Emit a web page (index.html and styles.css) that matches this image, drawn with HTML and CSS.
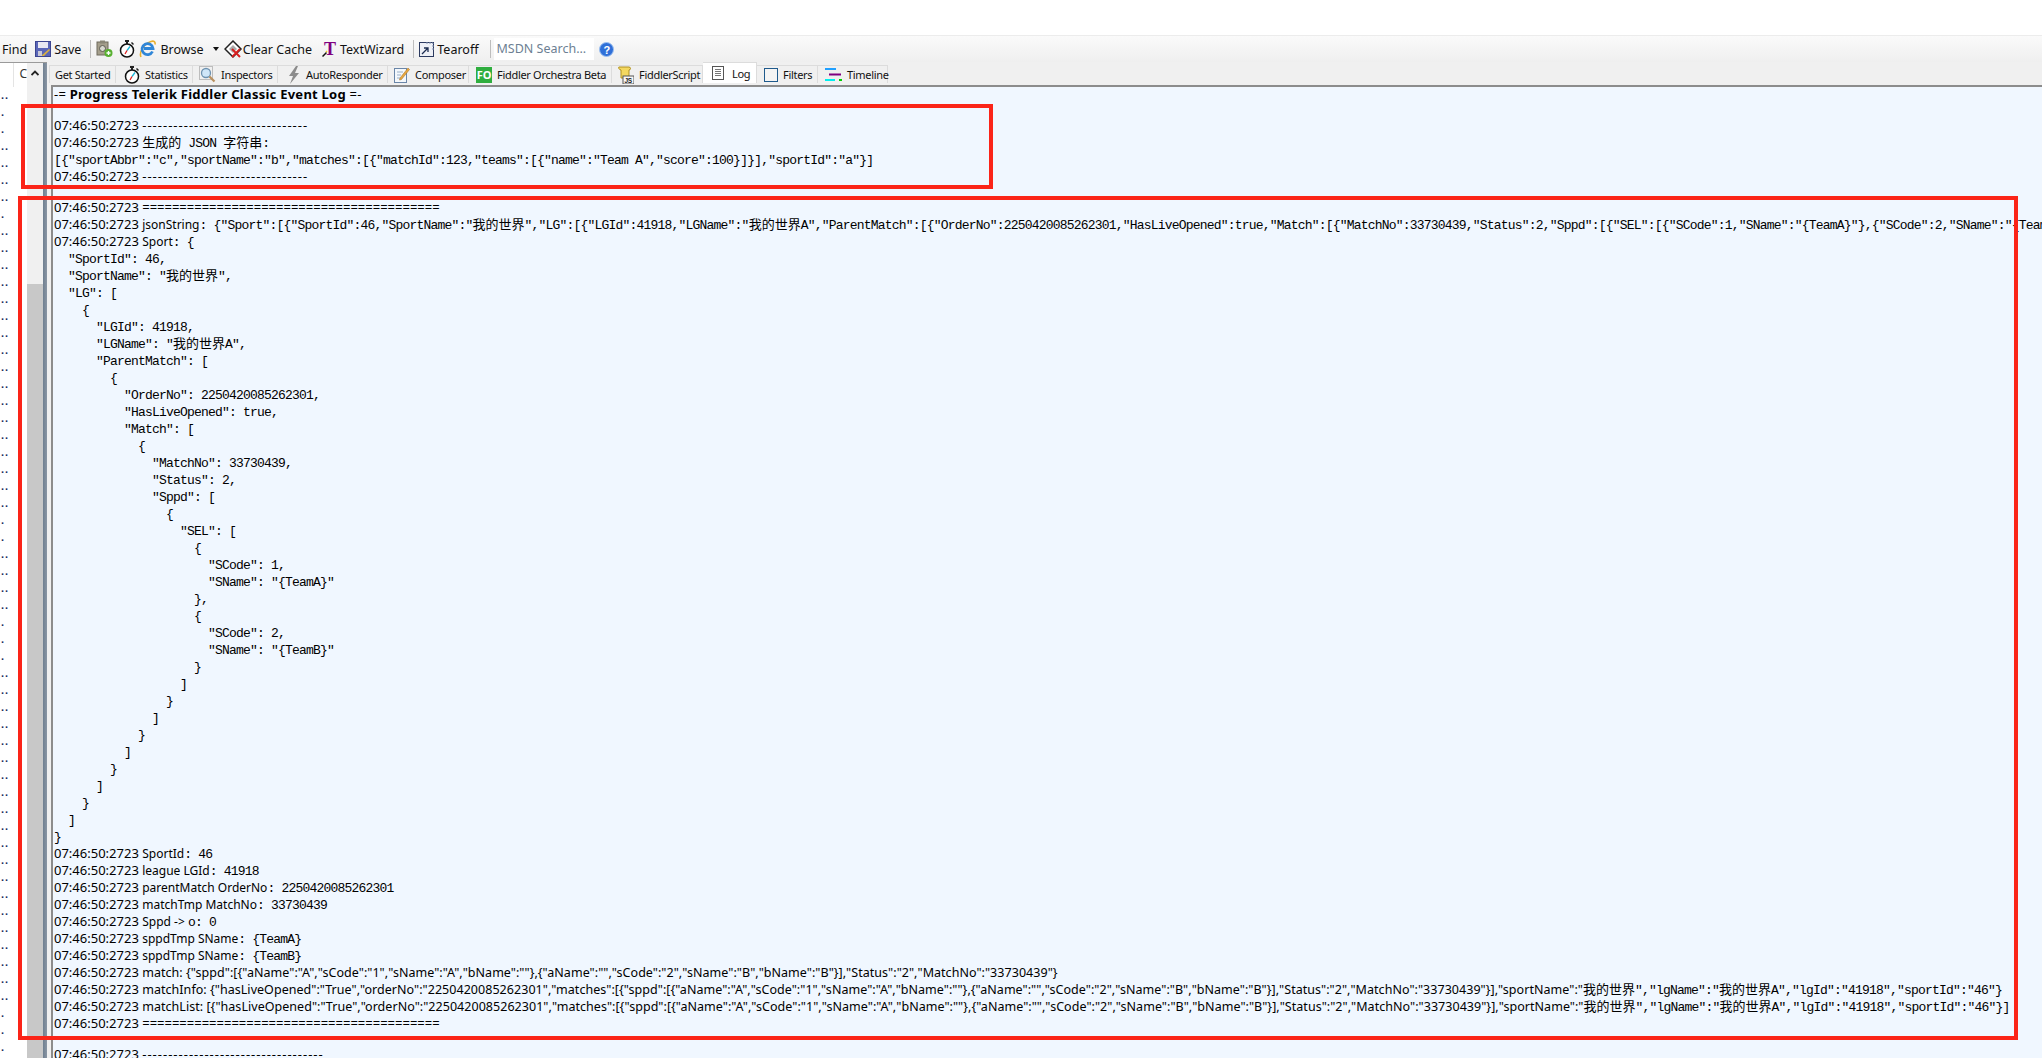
FILE: index.html
```html
<!DOCTYPE html>
<html lang="zh-CN">
<head>
    <meta charset="UTF-8">
    <title>Progress Telerik Fiddler Classic</title>
    <link rel="stylesheet" href="styles.css">
</head>
<body>
    <svg class="defs" width="0" height="0">
        <symbol id="stopwatch" viewBox="0 0 16 18">
            <rect x="6" y="0" width="4" height="2" fill="#222"/>
            <rect x="7" y="2" width="2" height="2" fill="#222"/>
            <path d="M12.500 2.500l2 2" stroke="#222" stroke-width="1.500"/>
            <circle cx="8" cy="10.500" r="6.500" fill="#fff" stroke="#111" stroke-width="1.500"/>
            <path d="M8 10.500l3-4" stroke="#19b5d8" stroke-width="1.300"/>
            <path d="M8 10.500l-2 3.500" stroke="#e02020" stroke-width="1.300"/>
        </symbol>
    </svg>

    <div class="titlebar"></div>

    <div class="toolbar">
        <span class="tool tool-find">Find</span>
        <span class="tool tool-save">
            <svg width="16" height="16" viewBox="0 0 16 16"><rect x="0.500" y="0.500" width="15" height="15" fill="#5a66b8" stroke="#3c4590"/><rect x="3" y="1" width="10" height="6" fill="#e8e8f2"/><path d="M6 15l8-7 1 1-6 6z" fill="#d8b040"/><path d="M3 10h4v5H3z" fill="#c8c8d8"/></svg>
            Save
        </span>
        <span class="sep sep-a"></span>
        <span class="tool tool-snap">
            <svg width="17" height="18" viewBox="0 0 17 18"><rect x="1" y="2" width="11" height="13" fill="#a59f8c" stroke="#6e6a5c"/><rect x="4" y="0.500" width="5" height="3" fill="#8a8676"/><circle cx="6.500" cy="8.500" r="3" fill="#d8d8d0" stroke="#5c5a50"/><circle cx="12.500" cy="13" r="4" fill="#58b030"/><path d="M10.500 13h4M12.500 11v4" stroke="#fff" stroke-width="1.300"/></svg>
        </span>
        <span class="tool tool-timer"><svg width="16" height="18"><use href="#stopwatch"/></svg></span>
        <span class="tool tool-browse">
            <svg width="17" height="18" viewBox="0 0 17 18"><path d="M2 17C0 13 4 4 12 1.500c3-1 4.500 .5 4 3" fill="none" stroke="#e8b030" stroke-width="1.600"/><path d="M13.500 11.500A5.500 5.500 0 1 1 14 8.500H5" fill="none" stroke="#2f86d8" stroke-width="2.800"/></svg>
            Browse
        </span>
        <svg class="tool-arrow" width="6" height="4" viewBox="0 0 6 4"><path d="M0 0h6L3 4z" fill="#111"/></svg>
        <span class="tool tool-clear">
            <svg width="19" height="19" viewBox="0 0 19 19"><path d="M9 1l8 8-8 8-8-8z" fill="#fff" stroke="#222" stroke-width="1.500"/><path d="M5 9l4-4 4 4-4 4z" fill="#aaa"/><path d="M8 9l8 8M16 9l-8 8" stroke="#d82020" stroke-width="2"/></svg>
            Clear Cache
        </span>
        <span class="tool tool-wizard">
            <svg width="15" height="16" viewBox="0 0 15 16"><text class="wizard-t" x="2" y="14">T</text><path d="M0.500 15.500l4-4" stroke="#111" stroke-width="1.500"/><path d="M4 11l1-1" stroke="#f0d020" stroke-width="1.500"/></svg>
            TextWizard
        </span>
        <span class="sep sep-b"></span>
        <span class="tool tool-tearoff">
            <svg width="15" height="15" viewBox="0 0 15 15"><rect x="0.500" y="0.500" width="14" height="14" fill="#eef0f6" stroke="#2c3a60"/><path d="M7 1h7v7" fill="none" stroke="#8090b0" stroke-dasharray="2 1"/><path d="M3 12l6-6M5 6h4v4" fill="none" stroke="#1c2c50" stroke-width="1.300"/></svg>
            Tearoff
        </span>
        <span class="sep sep-c"></span>
        <span class="msdn">MSDN Search...</span>
        <svg class="help" width="15" height="15" viewBox="0 0 15 15"><circle cx="7.500" cy="7.500" r="7" fill="#2f6fd8" stroke="#9cc0f0"/><text class="help-q" x="4.500" y="11.500">?</text></svg>
    </div>

    <div class="main">
        <div class="side">
            <div class="list">
                <div class="list-head"><span class="list-col"></span><span class="list-c">C</span></div>
                <pre class="dots">..
.
.
..
..
..
..
.
..
..
..
..
..
..
..
..
..
..
..
..
..
..
..
..
..
.
.
..
..
..
..
.
.
.
..
..
..
..
..
..
..
..
..
..
..
..
..
..
..
..
..
..
..
..
.
.
.</pre>
            </div>
            <div class="scroll">
                <div class="scroll-up"><svg width="8" height="6" viewBox="0 0 8 6"><path d="M0.500 5L4 1.500 7.500 5" fill="none" stroke="#222" stroke-width="1.800"/></svg></div>
                <div class="scroll-track"></div>
                <div class="scroll-thumb"></div>
            </div>
            <div class="side-edge"></div>
        </div>

        <div class="right">
            <div class="tabs">
                <div class="tab tab-started">Get Started</div>
                <div class="tab tab-stats"><svg width="16" height="18"><use href="#stopwatch"/></svg>Statistics</div>
                <div class="tab tab-inspect">
                    <svg width="17" height="17" viewBox="0 0 17 17"><rect x="0.500" y="0.500" width="13" height="13" fill="none" stroke="#8a8a8a" stroke-dasharray="1 1"/><circle cx="7" cy="7" r="4.500" fill="#cfe6f8" stroke="#6e92b0" stroke-width="1.300"/><path d="M10.500 10.500l5 5" stroke="#b89060" stroke-width="2.200"/></svg>
                    Inspectors
                </div>
                <div class="tab tab-auto">
                    <svg width="13" height="18" viewBox="0 0 13 18"><path d="M8 0L1 10h4l-3 8 9-11H7l3-7z" fill="#8c8c8c"/></svg>
                    AutoResponder
                </div>
                <div class="tab tab-composer">
                    <svg width="16" height="17" viewBox="0 0 16 17"><rect x="0.500" y="2.500" width="12" height="14" fill="#f4f8fc" stroke="#6a86a8"/><path d="M3 6h6M3 9h4M3 12h3" stroke="#9ab0c8"/><path d="M6 12l8-10 1.500 1.500-8 10-2 .5z" fill="#e8a840" stroke="#a06c20" stroke-width="0.500"/></svg>
                    Composer
                </div>
                <div class="tab tab-orch"><span class="fo">FO</span>Fiddler Orchestra Beta</div>
                <div class="tab tab-script">
                    <svg width="16" height="18" viewBox="0 0 16 18"><path d="M1 1h10c2 0 2 3 0 3v8H3V4C1 4 0 1 1 1z" fill="#f4d860" stroke="#b09020"/><rect x="5" y="10" width="11" height="8" fill="#f8f8f8" stroke="#555"/><text class="script-js" x="6.500" y="16.500">JS</text></svg>
                    FiddlerScript
                </div>
                <div class="tab tab-log active">
                    <svg width="12" height="14" viewBox="0 0 12 14"><rect x="0.500" y="0.500" width="11" height="13" fill="#fff" stroke="#555"/><path d="M3 3.500h6M3 5.500h6M3 7.500h6M3 9.500h6" stroke="#777"/></svg>
                    Log
                </div>
                <div class="tab tab-filters"><span class="filter-box"></span>Filters</div>
                <div class="tab tab-time">
                    <svg width="17" height="13" viewBox="0 0 17 13"><path d="M0 1h11" stroke="#20a0ff" stroke-width="2"/><path d="M4 6.500h12" stroke="#800080" stroke-width="2"/><path d="M0 12h10" stroke="#00f0f0" stroke-width="2"/><path d="M14 12h3" stroke="#00d000" stroke-width="2"/></svg>
                    Timeline
                </div>
            </div>

            <div class="log">
                <div class="line head"><span class="ts">-= <b>Progress Telerik Fiddler Classic Event Log</b> =-</span></div>
                <div class="gap"></div>
                <div class="line"><span class="ts">07:46:50:2723 <span class="dash">--------------------------------</span></span></div>
                <div class="line"><span class="ts">07:46:50:2723 </span><span class="mono"><span class="zh">生成的</span> JSON <span class="zh">字符串</span>:</span></div>
                <div class="line"><span class="mono">[{"sportAbbr":"c","sportName":"b","matches":[{"matchId":123,"teams":[{"name":"Team A","score":100}]}],"sportId":"a"}]</span></div>
                <div class="line"><span class="ts">07:46:50:2723 <span class="dash">--------------------------------</span></span></div>
                <div class="gap"></div>
                <div class="line"><span class="ts">07:46:50:2723 ========================================</span></div>
                <div class="line"><span class="ts">07:46:50:2723 </span><span class="sans">jsonString</span><span class="mono">: {"Sport":[{"SportId":46,"SportName":"<span class="zh">我的世界</span>","LG":[{"LGId":41918,"LGName":"<span class="zh">我的世界</span>A","ParentMatch":[{"OrderNo":2250420085262301,"HasLiveOpened":true,"Match":[{"MatchNo":33730439,"Status":2,"Sppd":[{"SEL":[{"SCode":1,"SName":"{TeamA}"},{"SCode":2,"SName":"{TeamB}"}]}]}]}]}]}]}</span></div>
                <div class="line"><span class="ts">07:46:50:2723 </span><span class="sans">Sport</span><span class="mono">: {</span></div>
                <div class="line"><span class="mono">  "SportId": 46,</span></div>
                <div class="line"><span class="mono">  "SportName": "<span class="zh">我的世界</span>",</span></div>
                <div class="line"><span class="mono">  "LG": [</span></div>
                <div class="line"><span class="mono">    {</span></div>
                <div class="line"><span class="mono">      "LGId": 41918,</span></div>
                <div class="line"><span class="mono">      "LGName": "<span class="zh">我的世界</span>A",</span></div>
                <div class="line"><span class="mono">      "ParentMatch": [</span></div>
                <div class="line"><span class="mono">        {</span></div>
                <div class="line"><span class="mono">          "OrderNo": 2250420085262301,</span></div>
                <div class="line"><span class="mono">          "HasLiveOpened": true,</span></div>
                <div class="line"><span class="mono">          "Match": [</span></div>
                <div class="line"><span class="mono">            {</span></div>
                <div class="line"><span class="mono">              "MatchNo": 33730439,</span></div>
                <div class="line"><span class="mono">              "Status": 2,</span></div>
                <div class="line"><span class="mono">              "Sppd": [</span></div>
                <div class="line"><span class="mono">                {</span></div>
                <div class="line"><span class="mono">                  "SEL": [</span></div>
                <div class="line"><span class="mono">                    {</span></div>
                <div class="line"><span class="mono">                      "SCode": 1,</span></div>
                <div class="line"><span class="mono">                      "SName": "{TeamA}"</span></div>
                <div class="line"><span class="mono">                    },</span></div>
                <div class="line"><span class="mono">                    {</span></div>
                <div class="line"><span class="mono">                      "SCode": 2,</span></div>
                <div class="line"><span class="mono">                      "SName": "{TeamB}"</span></div>
                <div class="line"><span class="mono">                    }</span></div>
                <div class="line"><span class="mono">                  ]</span></div>
                <div class="line"><span class="mono">                }</span></div>
                <div class="line"><span class="mono">              ]</span></div>
                <div class="line"><span class="mono">            }</span></div>
                <div class="line"><span class="mono">          ]</span></div>
                <div class="line"><span class="mono">        }</span></div>
                <div class="line"><span class="mono">      ]</span></div>
                <div class="line"><span class="mono">    }</span></div>
                <div class="line"><span class="mono">  ]</span></div>
                <div class="line"><span class="mono">}</span></div>
                <div class="line"><span class="ts">07:46:50:2723 </span><span class="sans">SportId</span><span class="mono">: 46</span></div>
                <div class="line"><span class="ts">07:46:50:2723 </span><span class="sans">league LGId</span><span class="mono">: 41918</span></div>
                <div class="line"><span class="ts">07:46:50:2723 </span><span class="sans">parentMatch OrderNo</span><span class="mono">: 2250420085262301</span></div>
                <div class="line"><span class="ts">07:46:50:2723 </span><span class="sans">matchTmp MatchNo</span><span class="mono">: 33730439</span></div>
                <div class="line"><span class="ts">07:46:50:2723 </span><span class="sans">Sppd -&gt; </span><span class="mono">o: 0</span></div>
                <div class="line"><span class="ts">07:46:50:2723 </span><span class="sans">sppdTmp SName</span><span class="mono">: {TeamA}</span></div>
                <div class="line"><span class="ts">07:46:50:2723 </span><span class="sans">sppdTmp SName</span><span class="mono">: {TeamB}</span></div>
                <div class="line"><span class="ts">07:46:50:2723 </span><span class="json">match: {"sppd":[{"aName":"A","sCode":"1","sName":"A","bName":""},{"aName":"","sCode":"2","sName":"B","bName":"B"}],"Status":"2","MatchNo":"33730439"}</span></div>
                <div class="line"><span class="ts">07:46:50:2723 </span><span class="json">matchInfo: {"hasLiveOpened":"True","orderNo":"2250420085262301","matches":[{"sppd":[{"aName":"A","sCode":"1","sName":"A","bName":""},{"aName":"","sCode":"2","sName":"B","bName":"B"}],"Status":"2","MatchNo":"33730439"}],"sportName":"</span><span class="mono"><span class="zh">我的世界</span>","lgName":"<span class="zh">我的世界</span>A","lgId":"41918","sportId":"46"}</span></div>
                <div class="line"><span class="ts">07:46:50:2723 </span><span class="json">matchList: [{"hasLiveOpened":"True","orderNo":"2250420085262301","matches":[{"sppd":[{"aName":"A","sCode":"1","sName":"A","bName":""},{"aName":"","sCode":"2","sName":"B","bName":"B"}],"Status":"2","MatchNo":"33730439"}],"sportName":"</span><span class="mono"><span class="zh">我的世界</span>","lgName":"<span class="zh">我的世界</span>A","lgId":"41918","sportId":"46"}]</span></div>
                <div class="line"><span class="ts">07:46:50:2723 ========================================</span></div>
                <div class="gap"></div>
                <div class="line"><span class="ts">07:46:50:2723 <span class="dash">-----------------------------------</span></span></div>
            </div>
        </div>
    </div>

    <div class="mark mark-top"></div>
    <div class="mark mark-bottom"></div>
</body>
</html>
```

FILE: styles.css
```css
html, body {
    margin: 0;
    height: 100%;
    overflow: hidden;
    background: #fff;
    color: #111;
    font-family: "Noto Sans", "Noto Sans CJK SC", sans-serif;
}
.defs {
    position: absolute;
}
.titlebar {
    height: 35px;
    background: #fff;
    border-bottom: 1px solid #ececec;
}

/* toolbar */
.toolbar {
    display: flex;
    align-items: center;
    height: 26px;
    background: linear-gradient(#fafafa, #efefef);
    font-size: 12.500px;
    white-space: nowrap;
}
.tool {
    display: flex;
    align-items: center;
    gap: 3px;
}
.tool-find { margin-left: 2px; }
.tool-save { margin-left: 8px; }
.sep {
    width: 1px;
    height: 18px;
    background: #bdbdbd;
}
.sep-a { margin-left: 9px; }
.tool-snap { margin-left: 5px; }
.tool-timer { margin-left: 6px; }
.tool-browse { margin-left: 4px; gap: 4px; }
.tool-arrow { margin-left: 9px; }
.tool-clear { margin-left: 5px; gap: 0; }
.tool-wizard { margin-left: 10px; }
.sep-b { margin-left: 9px; }
.tool-tearoff { margin-left: 5px; }
.sep-c { margin-left: 11px; }
.wizard-t {
    font-family: "Liberation Serif", serif;
    font-weight: bold;
    font-size: 18px;
    fill: #800080;
}
.msdn {
    width: 97px;
    margin-left: 3px;
    padding-left: 3px;
    height: 22px;
    line-height: 22px;
    background: #fff;
    color: #6d7f93;
}
.help {
    margin-left: 5px;
}
.help-q {
    font-family: "Liberation Sans", sans-serif;
    font-weight: bold;
    font-size: 11px;
    fill: #fff;
}

/* left list */
.main {
    display: flex;
    height: calc(100vh - 62px);
}
.side {
    display: flex;
    flex: none;
    width: 47px;
    border-top: 1px solid #9a9a9a;
    box-sizing: border-box;
}
.list {
    width: 27px;
    overflow: hidden;
    background: #fff;
}
.list-head {
    display: flex;
    height: 24px;
    font-size: 12px;
}
.list-col {
    width: 15px;
    border-right: 1px solid #e4e4e4;
}
.list-c {
    margin-left: 5px;
    line-height: 22px;
    color: #333;
}
.dots {
    margin: 0;
    padding: 0 0 0 1px;
    font: bold 11px/17px "Liberation Sans", sans-serif;
    letter-spacing: 1px;
    color: #1c2c60;
}
.scroll {
    display: flex;
    flex-direction: column;
    width: 16px;
    background: #f0f0f0;
}
.scroll-up {
    display: flex;
    justify-content: center;
    height: 20px;
    padding-top: 7px;
    box-sizing: border-box;
}
.scroll-track {
    height: 201px;
}
.scroll-thumb {
    flex: 1;
    background: #c8c8c8;
}
.side-edge {
    width: 4px;
    background: linear-gradient(90deg, #6f7f90, #8a96a4);
}

/* tabs */
.right {
    flex: 1;
    min-width: 0;
    display: flex;
    flex-direction: column;
    background: #f0f0f0;
}
.tabs {
    display: flex;
    align-items: flex-end;
    height: 21px;
    padding: 0 0 2px 2px;
    font-size: 11px;
    letter-spacing: -0.300px;
    white-space: nowrap;
}
.tab {
    display: flex;
    align-items: center;
    gap: 5px;
    height: 18px;
    box-sizing: border-box;
    padding: 0 6px;
    border: 1px solid #dcdcdc;
    border-width: 1px 1px 0 0;
    background: #f0f0f0;
}
.tab svg, .tab span {
    flex: none;
}
.tab-started { width: 67px; padding-left: 5px; border-left: 1px solid #dcdcdc; }
.tab-stats { width: 77px; padding-left: 8px; }
.tab-inspect { width: 85px; }
.tab-auto { width: 110px; padding-left: 10px; }
.tab-composer { width: 81px; }
.tab-orch { width: 143px; padding-left: 7px; }
.tab-script { width: 91px; padding-left: 6px; }
.tab-log { width: 54px; padding-left: 9px; gap: 8px; }
.tab-filters { width: 61px; padding-left: 7px; }
.tab-time { width: 70px; padding-left: 7px; }
.tab.active {
    height: 21px;
    background: #fff;
}
.fo {
    width: 16px;
    height: 16px;
    line-height: 16px;
    text-align: center;
    letter-spacing: 0;
    background: #2fae3f;
    color: #fff;
    font-weight: bold;
    font-size: 11px;
}
.filter-box {
    width: 12px;
    height: 12px;
    border: 1px solid #1f5a8c;
    background: #f4f4f4;
}
.script-js {
    font: bold 6.500px "Liberation Sans", sans-serif;
    fill: #222;
}

/* log text */
.log {
    flex: 1;
    overflow: hidden;
    margin-left: 4px;
    padding-left: 1px;
    border-left: 2px solid #8c8c8c;
    border-top: 2px solid #8c8c8c;
    background: #f0f7ff;
    color: #000;
}
.line {
    height: 17px;
    line-height: 17px;
    white-space: pre;
}
.head {
    margin-top: -2px;
    letter-spacing: 0.250px;
}
.gap {
    height: 14px;
}
.ts {
    font: 13px/17px "Noto Sans", "Noto Sans CJK SC", sans-serif;
}
.sans {
    font: 12px/17px "Noto Sans", "Noto Sans CJK SC", sans-serif;
}
.json {
    font: 12.500px/17px "Noto Sans", "Noto Sans CJK SC", sans-serif;
    letter-spacing: 0.040px;
}
.mono {
    font: 13px/17px "Liberation Mono", "Noto Sans CJK SC", monospace;
    letter-spacing: -0.800px;
}
.zh {
    font: 13px/17px "Noto Sans CJK SC", sans-serif;
    letter-spacing: 0;
}
.dash {
    letter-spacing: 1px;
}

/* red marks drawn over the screenshot */
.mark {
    position: absolute;
    box-sizing: border-box;
    border: 4px solid #fb2418;
}
.mark-top {
    left: 21px;
    top: 104px;
    width: 972px;
    height: 85px;
}
.mark-bottom {
    left: 18px;
    top: 196px;
    width: 2000px;
    height: 844px;
}
```
